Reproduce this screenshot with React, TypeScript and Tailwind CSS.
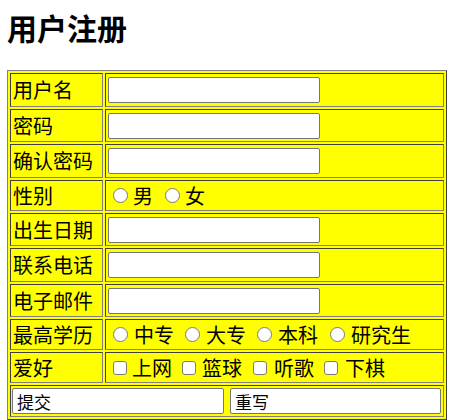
import React from "react";

const font = { fontFamily: '"Noto Sans CJK SC", "Noto Sans", sans-serif' };

function Cell({ children, className = "" }: { children?: React.ReactNode; className?: string }) {
  return (
    <div
      className={`flex items-center border border-t-[#404040] border-l-[#404040] border-b-[#808080] border-r-[#808080] p-[1px] ${className}`}
    >
      {children}
    </div>
  );
}

function TextBox() {
  return (
    <input
      type="text"
      className="ml-[1px] w-[212px] h-[26px] bg-white border border-[#767676] rounded-[2px] outline-none"
    />
  );
}

function Radio() {
  return <span className="inline-block w-[15px] h-[15px] rounded-full border-[1.5px] border-[#7a7a7a] bg-white shrink-0" />;
}

function Check() {
  return <span className="inline-block w-[14px] h-[14px] rounded-[3px] border-[1.5px] border-[#7a7a7a] bg-white shrink-0" />;
}

export default function App() {
  const label = "text-[20px] leading-[24px] text-black pl-[1px]";
  const rows: { name: string; h: string; content: React.ReactNode }[] = [
    { name: "用户名", h: "h-[34px]", content: <TextBox /> },
    { name: "密码", h: "h-[33px]", content: <TextBox /> },
    { name: "确认密码", h: "h-[34px]", content: <TextBox /> },
    {
      name: "性别",
      h: "h-[31px]",
      content: (
        <div className="flex items-center text-[20px] leading-[24px] pl-[6px]">
          <Radio />
          <span className="ml-[5px]">男</span>
          <span className="ml-[12px] flex"><Radio /></span>
          <span className="ml-[5px]">女</span>
        </div>
      ),
    },
    { name: "出生日期", h: "h-[33px]", content: <TextBox /> },
    { name: "联系电话", h: "h-[34px]", content: <TextBox /> },
    { name: "电子邮件", h: "h-[33px]", content: <TextBox /> },
    {
      name: "最高学历",
      h: "h-[31px]",
      content: (
        <div className="flex items-center text-[20px] leading-[24px] pl-[6px]">
          <Radio />
          <span className="ml-[6px] w-[51px]">中专</span>
          <Radio />
          <span className="ml-[6px] w-[51px]">大专</span>
          <Radio />
          <span className="ml-[6px] w-[52px]">本科</span>
          <Radio />
          <span className="ml-[6px]">研究生</span>
        </div>
      ),
    },
    {
      name: "爱好",
      h: "h-[31px]",
      content: (
        <div className="flex items-center text-[20px] leading-[24px] pl-[6px]">
          <Check />
          <span className="ml-[5px] w-[50px]">上网</span>
          <Check />
          <span className="ml-[6px] w-[51px]">篮球</span>
          <Check />
          <span className="ml-[7px] w-[50px]">听歌</span>
          <Check />
          <span className="ml-[7px]">下棋</span>
        </div>
      ),
    },
  ];

  return (
    <div className="w-[457px] h-[420px] bg-white overflow-hidden" style={font}>
      <h1 className="ml-[7px] mt-[10px] h-[34px] text-[30px] leading-[34px] font-bold text-black">用户注册</h1>
      <div className="ml-[7px] mt-[26px] w-[440px] border border-t-[#808080] border-l-[#808080] border-b-[#404040] border-r-[#404040] bg-[#ffff00] p-[2px]">
        <div className="grid grid-cols-[93px_339px] gap-[2px]">
          {rows.map((r) => (
            <React.Fragment key={r.name}>
              <Cell className={r.h}>
                <span className={label}>{r.name}</span>
              </Cell>
              <Cell className={r.h}>{r.content}</Cell>
            </React.Fragment>
          ))}
          <Cell className="col-span-2 h-[32px]">
            <div className="flex items-center gap-[6px]">
              <input
                type="text"
                defaultValue="提交"
                className="w-[212px] h-[26px] bg-white border border-[#767676] rounded-[2px] px-[4px] text-[17px] text-black outline-none"
                style={font}
              />
              <input
                type="text"
                defaultValue="重写"
                className="w-[211px] h-[26px] bg-white border border-[#767676] rounded-[2px] px-[4px] text-[17px] text-black outline-none"
                style={font}
              />
            </div>
          </Cell>
        </div>
      </div>
    </div>
  );
}
